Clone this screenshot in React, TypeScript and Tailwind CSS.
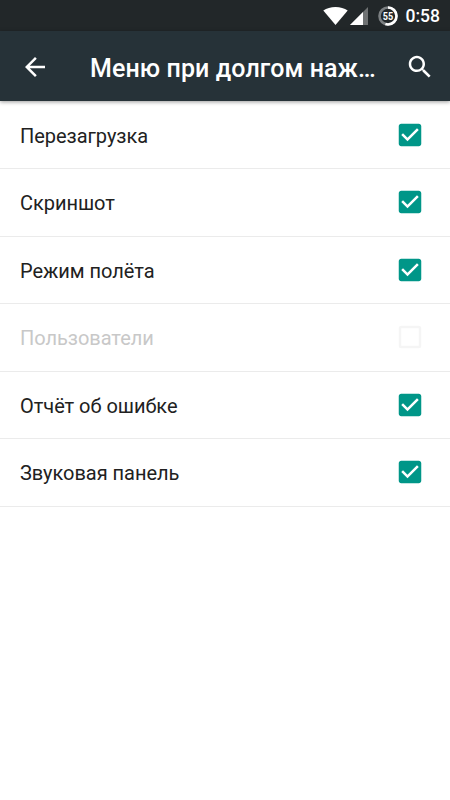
const menuItems = [
  { id: "reboot", label: "Перезагрузка", checked: true, disabled: false },
  { id: "screenshot", label: "Скриншот", checked: true, disabled: false },
  { id: "airplane", label: "Режим полёта", checked: true, disabled: false },
  { id: "users", label: "Пользователи", checked: false, disabled: true },
  { id: "bugreport", label: "Отчёт об ошибке", checked: true, disabled: false },
  { id: "sound", label: "Звуковая панель", checked: true, disabled: false },
];

export default function App() {
  return (
    <div className="h-[800px] w-[450px] overflow-hidden bg-white font-['Roboto','Noto_Sans',sans-serif]">
      <StatusBar />
      <Toolbar title="Меню при долгом наж…" />
      <ul className="pt-[0.5px]">
        {menuItems.map((item) => (
          <li
            key={item.id}
            className="flex h-[67.5px] items-center justify-between border-b border-[#ebebeb] pr-[24.75px] pl-5"
          >
            <span
              className={`pt-0.5 text-[20px] leading-6 tracking-[-0.04px] ${item.disabled ? "text-[#c8c8c8]" : "text-[#212121]"}`}
            >
              {item.label}
            </span>
            <Checkbox checked={item.checked} />
          </li>
        ))}
      </ul>
    </div>
  );
}

function StatusBar() {
  return (
    <header className="flex h-[31px] items-center justify-end bg-[#222729] pr-[10px] text-white">
      <svg className="h-[18px] w-[25px]" viewBox="0 0 25 18" fill="currentColor">
        <path d="M12.5 18 0.3 3.6C3.6 1.2 7.8 0 12.5 0s8.900 1.200 12.200 3.600z" />
      </svg>
      <svg className="ml-[2px] h-[18px] w-[18px]" viewBox="0 0 18 18" fill="currentColor">
        <path d="M18 0v18H0z" opacity="0.35" />
        <path d="M13 5v13H0z" />
      </svg>
      <BatteryRing level={55} />
      <span className="ml-[8px] pt-px text-[17.5px] leading-5 font-medium">0:58</span>
    </header>
  );
}

function BatteryRing({ level }: { level: number }) {
  return (
    <svg className="ml-[10px] h-5 w-5" viewBox="0 0 20 20">
      <circle cx="10" cy="10" r="8.5" fill="none" stroke="#7b7f81" strokeWidth="2.6" />
      <circle
        cx="10"
        cy="10"
        r="8.5"
        fill="none"
        stroke="#fff"
        strokeWidth="2.6"
        pathLength="100"
        strokeDasharray={`${level} 100`}
        transform="rotate(-90 10 10)"
      />
      <text
        x="4.800"
        y="13.800"
        textLength="10.400"
        lengthAdjust="spacingAndGlyphs"
        fontSize="10.800"
        fontWeight="700"
        fill="#fff"
      >
        {level}
      </text>
    </svg>
  );
}

function Toolbar({ title }: { title: string }) {
  return (
    <div className="relative flex h-[70px] items-center bg-[#263238] pr-[14.75px] pl-[20px] text-white shadow-[0_1px_4px_rgba(0,0,0,0.4)]">
      <svg className="mt-px h-[30px] w-[30px] shrink-0" viewBox="0 0 24 24" fill="currentColor">
        <path d="M20 11H7.830l5.590-5.590L12 4l-8 8 8 8 1.410-1.410L7.830 13H20v-2z" />
      </svg>
      <h1 className="ml-[40px] flex-1 pt-[5px] text-[25px] leading-8 font-medium tracking-[0.1px] whitespace-nowrap">
        {title}
      </h1>
      <svg className="mt-px h-[30px] w-[30px] shrink-0" viewBox="0 0 24 24" fill="currentColor">
        <path d="M15.500 14h-.79l-.28-.27C15.410 12.590 16 11.110 16 9.500 16 5.910 13.090 3 9.500 3S3 5.910 3 9.500 5.910 16 9.500 16c1.610 0 3.090-.59 4.230-1.570l.27.28v.79l5 4.990L20.490 19l-4.990-5zm-6 0C7.010 14 5 11.990 5 9.500S7.010 5 9.500 5 14 7.010 14 9.500 11.990 14 9.500 14z" />
      </svg>
    </div>
  );
}

function Checkbox({ checked }: { checked: boolean }) {
  return (
    <svg className="h-[30px] w-[30px] shrink-0" viewBox="0 0 24 24">
      {checked ? (
        <path
          fill="#009688"
          d="M19 3H5c-1.110 0-2 .9-2 2v14c0 1.100.89 2 2 2h14c1.110 0 2-.9 2-2V5c0-1.100-.89-2-2-2zm-9 14l-5-5 1.410-1.410L10 14.170l7.590-7.590L19 8l-9 9z"
        />
      ) : (
        <rect x="4" y="4" width="16" height="16" rx="1" fill="none" stroke="#f5f5f5" strokeWidth="2" />
      )}
    </svg>
  );
}
